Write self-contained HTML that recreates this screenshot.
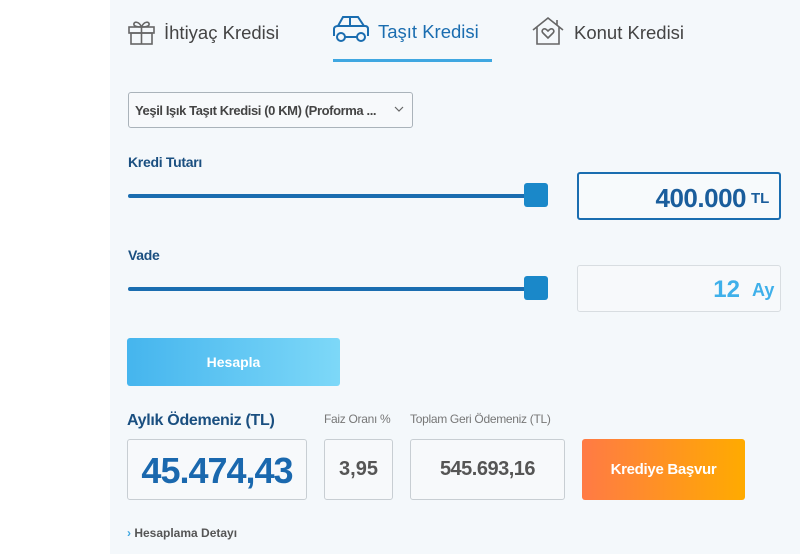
<!DOCTYPE html>
<html><head><meta charset="utf-8"><style>
*{margin:0;padding:0;box-sizing:border-box}
body{width:800px;height:554px;background:#fff;font-family:"Liberation Sans",sans-serif;position:relative;overflow:hidden}
.panel{position:absolute;left:110px;top:0;width:690px;height:554px;background:#f4f8fb}
.a{position:absolute}
.tab{font-size:18.5px;color:#444;top:22px}
.box{position:absolute;border:1px solid #cfd6dc;border-radius:3px;background:#f7f9fb}
.track{position:absolute;left:128px;width:400px;height:4px;background:#1a6db0;border-radius:2px}
.thumb{position:absolute;left:524px;width:24px;height:24px;background:#1a88c9;border-radius:3px}
.lbl{position:absolute;font-size:14px;font-weight:bold;color:#1a4f80;letter-spacing:-0.3px}
</style></head><body>
<div class="panel"></div>
<svg class="a" style="left:127px;top:19px" width="30" height="26" viewBox="0 0 30 26" fill="none" stroke="#666" stroke-width="1.6"><rect x="2" y="8" width="25" height="6"/><rect x="4" y="14" width="21" height="11"/><path d="M14.5 8v17M14.5 8C12 2 6 2 7 6c1 2 5 2 7.5 2M14.5 8C17 2 23 2 22 6c-1 2-5 2-7.5 2"/></svg>
<div class="a tab" style="left:164px">İhtiyaç Kredisi</div>
<svg class="a" style="left:332px;top:15px" width="38" height="28" viewBox="0 0 38 28" fill="none" stroke="#1a6db0" stroke-width="2"><path d="M6 11l5-9h15l6 9M2 21v-7c0-2 2-3 4-3h27c2 0 3 1 3 3v7"/><path d="M18 2v9"/><circle cx="9" cy="22" r="4"/><circle cx="29" cy="22" r="4"/><path d="M13 22h12"/></svg>
<div class="a tab" style="left:378px;top:21px;color:#1a6db0">Taşıt Kredisi</div>
<div class="a" style="left:333px;top:59px;width:159px;height:3px;background:#3fa7e1"></div>
<svg class="a" style="left:531px;top:16px" width="34" height="30" viewBox="0 0 34 30" fill="none" stroke="#666" stroke-width="1.6"><path d="M2 14L17 2l15 12M6 11v17h22V11M26 4v5"/><path d="M17 22l-5-5c-2-2 0-5 2.5-4 1 .5 2 1.5 2.5 2 .5-.5 1.5-1.5 2.5-2 2.5-1 4.5 2 2.5 4z"/></svg>
<div class="a tab" style="left:574px">Konut Kredisi</div>
<div class="box" style="left:128px;top:92px;width:285px;height:36px;border-color:#aab3ba;background:#f7f9fb"></div>
<div class="a" style="left:135px;top:103px;font-size:13px;color:#444;font-weight:bold;letter-spacing:-0.4px">Yeşil Işık Taşıt Kredisi (0 KM) (Proforma ...</div>
<svg class="a" style="left:394px;top:106px" width="10" height="7" viewBox="0 0 10 7" fill="none" stroke="#666" stroke-width="1.2"><path d="M1 1l4 4 4-4"/></svg>
<div class="lbl" style="left:128px;top:154px">Kredi Tutarı</div>
<div class="track" style="top:194px"></div><div class="thumb" style="top:183px"></div>
<div class="box" style="left:577px;top:172px;width:204px;height:48px;border:2px solid #1a6db0;background:#f7fafc"></div>
<div class="a" style="left:636px;top:183px;width:110px;text-align:right;font-size:26px;font-weight:bold;color:#1a5d9c;letter-spacing:-0.5px">400.000</div>
<div class="a" style="left:751px;top:190px;font-size:15px;font-weight:bold;color:#1a5d9c">TL</div>
<div class="lbl" style="left:128px;top:247px">Vade</div>
<div class="track" style="top:287px"></div><div class="thumb" style="top:276px"></div>
<div class="box" style="left:577px;top:265px;width:204px;height:47px;border-color:#d8dde1"></div>
<div class="a" style="left:700px;top:276px;width:40px;text-align:right;font-size:24px;font-weight:bold;color:#3fb0ea">12</div>
<div class="a" style="left:752px;top:280px;font-size:18px;font-weight:bold;color:#3fb0ea">Ay</div>
<div class="a" style="left:127px;top:338px;width:213px;height:48px;border-radius:3px;background:linear-gradient(90deg,#45b5ee,#7dd8f8);color:#fff;font-size:14px;font-weight:bold;text-align:center;line-height:48px">Hesapla</div>
<div class="a" style="left:127px;top:412px;font-size:16px;font-weight:bold;color:#1a4f80;letter-spacing:-0.3px">Aylık Ödemeniz (TL)</div>
<div class="a" style="left:324px;top:412px;font-size:12px;color:#777;letter-spacing:-0.3px">Faiz Oranı %</div>
<div class="a" style="left:410px;top:412px;font-size:12px;color:#777;letter-spacing:-0.3px">Toplam Geri Ödemeniz (TL)</div>
<div class="box" style="left:127px;top:439px;width:180px;height:61px;border-color:#c8ced3"></div>
<div class="a" style="left:127px;top:450px;width:180px;text-align:center;font-size:36px;font-weight:bold;color:#1a68ae;letter-spacing:-1px">45.474,43</div>
<div class="box" style="left:324px;top:439px;width:69px;height:61px;border-color:#c8ced3"></div>
<div class="a" style="left:324px;top:458px;width:69px;text-align:center;font-size:20px;font-weight:bold;color:#555">3,95</div>
<div class="box" style="left:410px;top:439px;width:155px;height:61px;border-color:#c8ced3"></div>
<div class="a" style="left:410px;top:458px;width:155px;text-align:center;font-size:20px;font-weight:bold;color:#555;letter-spacing:-0.5px">545.693,16</div>
<div class="a" style="left:582px;top:439px;width:163px;height:61px;border-radius:3px;background:linear-gradient(90deg,#ff7a45,#ffab00);color:#fff;font-size:15px;font-weight:bold;text-align:center;line-height:61px;letter-spacing:-0.3px">Krediye Başvur</div>
<div class="a" style="left:127px;top:526px;font-size:12px;font-weight:bold;color:#555"><span style="color:#3fa7e1">›</span> Hesaplama Detayı</div>
</body></html>
